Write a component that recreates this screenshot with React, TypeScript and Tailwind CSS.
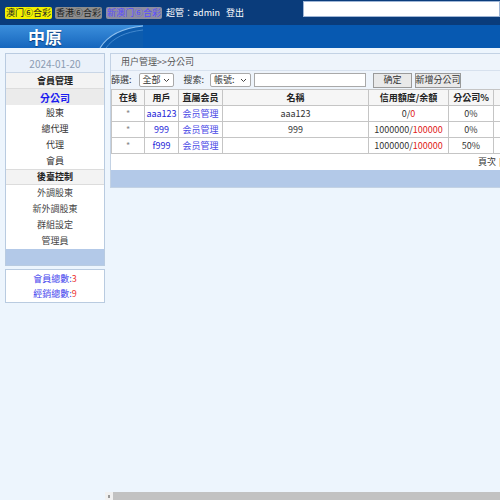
import React from 'react';

const font = { fontFamily: '"Noto Sans CJK TC", "Noto Sans", sans-serif' };

const memberItems = ['股東', '總代理', '代理', '會員'];
const controlItems = ['外調股東', '新外調股東', '群組設定', '管理員'];

const rows = [
  { user: 'aaa123', name: 'aaa123', credit: '0', balance: '0', pct: '0%', next: '100%' },
  { user: '999', name: '999', credit: '1000000', balance: '100000', pct: '0%', next: '100%' },
  { user: 'f999', name: '', credit: '1000000', balance: '100000', pct: '50%', next: '50%' },
];

function Sidebar() {
  return (
    <div className="w-[100px] shrink-0 ml-[5px] mt-[5px]">
      <div className="border border-[#b9cbe0] bg-white">
        <div className="h-[19px] flex items-center justify-center bg-[#eaf1fa] text-[#8b9bb2] text-[10px] border-b border-[#c9d6e6]">
          2024-01-20
        </div>
        <div className="h-[16px] flex items-center justify-center bg-[#f3f3f3] font-bold text-[9px] text-[#222] border-b border-[#dcdcdc]">
          會員管理
        </div>
        <div className="h-[16px] flex items-center justify-center bg-[#ebebeb] font-bold text-[10px] text-[#1b1bf0]">
          分公司
        </div>
        {memberItems.map((m) => (
          <div key={m} className="h-[16px] flex items-center justify-center text-[9px] text-[#333]">
            {m}
          </div>
        ))}
        <div className="h-[16px] flex items-center justify-center bg-[#f3f3f3] font-bold text-[9px] text-[#222] border-y border-[#dcdcdc]">
          後臺控制
        </div>
        {controlItems.map((m) => (
          <div key={m} className="h-[16px] flex items-center justify-center text-[9px] text-[#444]">
            {m}
          </div>
        ))}
        <div className="h-[16px] bg-[#b3c9e8]" />
      </div>
      <div className="mt-[3px] border border-[#b9cbe0] bg-white py-[1px]">
        <div className="h-[15px] flex items-center justify-center text-[9px] text-[#4545ee]">
          會員總數:<span className="text-[#ee3333]">3</span>
        </div>
        <div className="h-[15px] flex items-center justify-center text-[9px] text-[#4545ee]">
          經銷總數:<span className="text-[#ee3333]">9</span>
        </div>
      </div>
    </div>
  );
}

function Select({ label, w }: { label: string; w: string }) {
  return (
    <div className={`${w} h-[14px] flex items-center justify-between border border-[#a9a9a9] rounded-[2px] bg-white px-[3px] text-[9px] text-[#333] whitespace-nowrap`}>
      <span>{label}</span>
      <svg width="7" height="5" viewBox="0 0 7 5">
        <path d="M1 1l2.5 2.5L6 1" fill="none" stroke="#444" strokeWidth="1" />
      </svg>
    </div>
  );
}

function MainPanel() {
  const th = 'border border-[#c5c5c5] font-bold h-[16px] text-[9px] text-[#222] bg-[#f6f6f6] whitespace-nowrap';
  const td = 'border border-[#c5c5c5] h-[16px] text-[9px] text-center whitespace-nowrap';
  return (
    <div className="flex-1 min-w-0 overflow-hidden flex flex-col">
      <div className="ml-[5px] mt-[5px] w-[560px] border border-[#c3d2e4] bg-white">
        <div className="h-[17px] flex items-center pl-[10px] bg-[#eef4fb] text-[9px] text-[#555] border-b border-[#d7e1ee]">
          用户管理&gt;&gt;分公司
        </div>
        <div className="h-[18px] flex items-center bg-[#eef4fb] text-[9px] text-[#333] whitespace-nowrap">
          <span>篩選:</span>
          <Select label="全部" w="ml-[7px] w-[35px]" />
          <span className="ml-[10px]">搜索:</span>
          <Select label="帳號:" w="ml-[6px] w-[41px]" />
          <div className="ml-[3px] w-[112px] h-[14px] border border-[#a9a9a9] bg-white" />
          <div className="ml-[7px] w-[39px] h-[15px] flex items-center justify-center border border-[#9a9a9a] bg-[#e9e9e9] text-[9px]">
            确定
          </div>
          <div className="ml-[3px] w-[46px] h-[15px] flex items-center justify-center border border-[#9a9a9a] bg-[#e9e9e9] text-[9px]">
            新增分公司
          </div>
        </div>
        <table className="w-full border-collapse table-fixed">
          <colgroup>
            <col className="w-[33px]" />
            <col className="w-[34px]" />
            <col className="w-[44px]" />
            <col className="w-[146px]" />
            <col className="w-[80px]" />
            <col className="w-[45px]" />
            <col className="w-[50px]" />
            <col />
          </colgroup>
          <thead>
            <tr>
              <th className={th}>在线</th>
              <th className={th}>用戶</th>
              <th className={th}>直屬会员</th>
              <th className={th}>名稱</th>
              <th className={th}>信用額度/余額</th>
              <th className={th}>分公司%</th>
              <th className={th}>公司%</th>
              <th className={th}>操作</th>
            </tr>
          </thead>
          <tbody>
            {rows.map((r) => (
              <tr key={r.user}>
                <td className={`${td} text-[#888]`}>*</td>
                <td className={`${td} text-[#2525d8]`}>{r.user}</td>
                <td className={`${td} text-[#4a4ae6]`}>会员管理</td>
                <td className={`${td} text-[#333]`}>{r.name}</td>
                <td className={`${td} text-[#333]`}>
                  {r.credit}/<span className="text-[#e02020]">{r.balance}</span>
                </td>
                <td className={`${td} text-[#333]`}>{r.pct}</td>
                <td className={`${td} text-[#333]`}>{r.next}</td>
                <td className={`${td} text-[#333]`}></td>
              </tr>
            ))}
          </tbody>
        </table>
        <div className="h-[16px] flex items-center pl-[367px] text-[9px] text-[#333] whitespace-nowrap">
          頁次 <span className="font-bold ml-[3px]">[</span>1/1<span className="font-bold">]</span>
        </div>
        <div className="h-[17px] bg-[#b3c9e8]" />
      </div>
      <div className="mt-auto h-[8px] flex">
        <div className="w-[8px] h-[8px] bg-[#f0f0f0] flex items-center justify-center">
          <div className="w-[2px] h-[3px] bg-[#999]" />
        </div>
        <div className="flex-1 h-[8px] bg-[#c2c2c2]" />
      </div>
    </div>
  );
}

export default function App() {
  return (
    <div className="w-[500px] h-[500px] overflow-hidden bg-[#edf5fd] flex flex-col" style={font}>
      <div className="h-[25px] bg-[#0a3c7b] flex items-center pl-[5px] shrink-0 whitespace-nowrap">
        <span className="h-[12px] px-[1px] flex items-center bg-[#f2f200] text-[#222] text-[9px] rounded-[2px] leading-none">
          澳门⑥合彩
        </span>
        <span className="ml-[3px] h-[12px] px-[1px] flex items-center bg-[#8d8d8d] text-[#1e1e1e] text-[9px] rounded-[2px] leading-none">
          香港⑥合彩
        </span>
        <span className="ml-[4px] h-[12px] px-[1px] flex items-center bg-[#8e8ea0] text-[#5a4cff] text-[9px] rounded-[2px] leading-none">
          新澳门⑥合彩
        </span>
        <span className="ml-[4px] text-white text-[9px]">超管：admin</span>
        <span className="ml-[6px] text-white text-[9px]">登出</span>
        <div className="ml-auto self-start mt-[1px] w-[197px] h-[16px] bg-white border border-[#9fb6d6]" />
      </div>
      <div className="h-[23px] flex shrink-0 bg-[#0759b1]">
        <div className="relative w-[143px] h-full bg-gradient-to-b from-[#3b8fdc] to-[#1566bd]">
          <svg className="absolute inset-0" width="143" height="23" viewBox="0 0 143 23">
            <path d="M100 23 C108 10 122 3 143 1 L143 23 Z" fill="#0d5cae" />
            <path d="M100 23 C108 10 122 3 143 1" fill="none" stroke="#8fc0ee" strokeWidth="1.2" />
            <path d="M106 23 C113 13 125 7 143 5" fill="none" stroke="#4f93d6" strokeWidth="0.8" />
          </svg>
          <span className="absolute left-[28px] top-[2px] text-white font-bold text-[17px] leading-[19px] [text-shadow:0_1px_1px_#0a3c7b]">
            中原
          </span>
        </div>
        <div className="flex-1 bg-[#0759b1]" />
      </div>
      <div className="flex flex-1 min-h-0">
        <Sidebar />
        <MainPanel />
      </div>
    </div>
  );
}
